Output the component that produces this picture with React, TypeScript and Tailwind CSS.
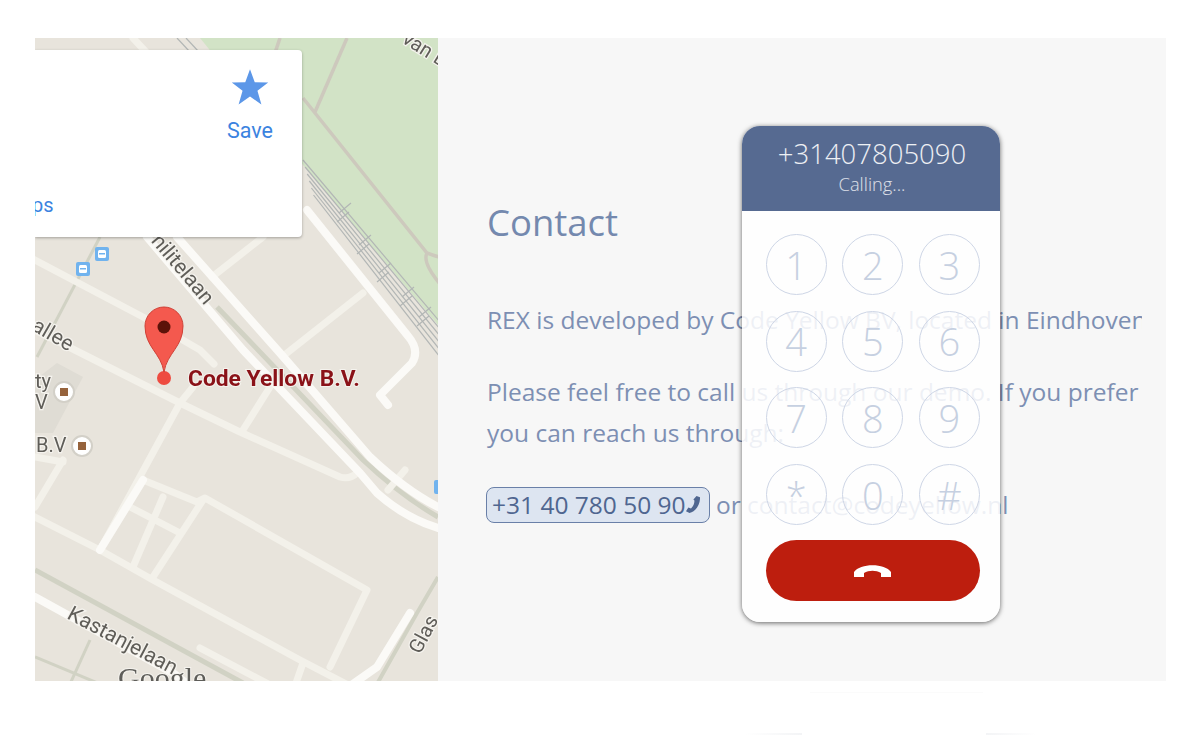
import React from "react";

const minorRoads = [
  "M35 330 L180 403 L240 432 L340 477 Q350 480 358 472",
  "M193 387 L180 403 L100 550",
  "M270 387 L243 430",
  "M35 517 L100 550 L153 580 L300 660 L350 686",
  "M143 480 L197 502 L205 498 L367 590 L330 667",
  "M130 507 L180 533",
  "M163 497 L133 567",
  "M203 500 L153 577",
  "M63 460 L35 507",
  "M35 457 L63 462",
  "M263 237 L212 277",
  "M363 293 L287 353",
  "M303 663 L295 686",
  "M200 648 L272 686",
  "M35 260 L143 317 L200 350 L214 364",
  "M405 470 L388 490",
  "M133 38 L146 52",
];

const majorRoads = [
  "M147 237 L243 350 L360 473 L377 493 Q405 518 438 528",
  "M177 237 L280 353 L370 457 Q405 490 438 507",
  "M307 210 L408 336 Q420 350 412 363 L380 395 L388 405",
  "M35 597 L173 673 L190 686",
  "M410 613 L377 667 L350 686",
  "M100 550 L143 480",
];

const railLines = [0, 7, 14, 21, 28, 35];
const railTies = [
  [345, 208],
  [365, 240],
  [385, 268],
  [408, 292],
  [425, 312],
];

const MapDrawing: React.FC = () => (
  <svg viewBox="35 38 403 643" className="absolute inset-0 h-full w-full blur-[0.6px]">
    <rect x="35" y="38" width="403" height="643" fill="#e8e4dc" />
    <polygon points="200,38 438,38 438,325 303,165" fill="#d2e3c6" />
    <polygon points="35,380 57,363 83,377 53,433 35,433" fill="#dfdcd4" />

    {/* green paths */}
    <g fill="none" stroke="#cdc9bd" strokeWidth="3.5">
      <path d="M347 38 L315 112" />
      <path d="M280 38 L274 56" />
      <path d="M303 98 L427 253 Q438 257 440 257" />
      <path d="M427 253 Q422 262 440 284" />
    </g>

    {/* railway */}
    <g fill="none" stroke="#b2b6b5" strokeWidth="1.2">
      <path d="M177 38 L190 52" />
      <path d="M186 38 L199 52" />
      {railLines.map((o) => (
        <path key={o} d={`M${303 + o * 0.3} ${160 + o} L${440} ${322 + o}`} />
      ))}
      {railTies.map(([x, y]) => (
        <path key={x} d={`M${x - 6} ${y + 5} L${x + 6} ${y - 5} M${x - 8} ${y + 14} L${x + 4} ${y + 4}`} />
      ))}
    </g>

    <g fill="none" stroke="#d1d2c4" strokeWidth="5">
      <path d="M35 570 L243 683" />
      <path d="M100 237 L37 357" strokeWidth="3" />
      <path d="M217 307 L363 460 Q400 495 438 517" />
      <path d="M438 577 L417 613 L377 684" strokeWidth="4" />
      <path d="M90 640 L70 684" strokeWidth="3" />
      <path d="M35 657 L100 684" strokeWidth="3" />
    </g>

    <g fill="none" stroke="#f3f1ea" strokeWidth="7" strokeLinecap="round" strokeLinejoin="round">
      {minorRoads.map((d) => (
        <path key={d} d={d} />
      ))}
    </g>
    <g fill="none" stroke="#fbfaf7" strokeWidth="8" strokeLinecap="round" strokeLinejoin="round">
      {majorRoads.map((d) => (
        <path key={d} d={d} />
      ))}
    </g>

    {/* bus stops */}
    <g>
      <rect x="95" y="247" width="14" height="14" rx="2" fill="#71b3ee" />
      <rect x="98" y="250" width="8" height="8" rx="1.5" fill="#fff" />
      <rect x="99" y="253" width="6" height="1.5" fill="#71b3ee" />
      <rect x="76" y="262" width="14" height="14" rx="2" fill="#71b3ee" />
      <rect x="79" y="265" width="8" height="8" rx="1.5" fill="#fff" />
      <rect x="80" y="268" width="6" height="1.5" fill="#71b3ee" />
      <rect x="434" y="480" width="10" height="14" rx="2" fill="#71b3ee" />
    </g>

    {/* places */}
    <g>
      <circle cx="64" cy="392" r="10" fill="#fff" stroke="#d3d0c8" strokeWidth="2" />
      <rect x="60" y="388" width="8" height="8" fill="#96633c" />
      <circle cx="82" cy="446" r="10" fill="#fff" stroke="#d3d0c8" strokeWidth="2" />
      <rect x="78" y="442" width="8" height="8" fill="#96633c" />
    </g>

    <g
      fill="#5f5d58"
      stroke="#f5f3ee"
      strokeWidth="2.5"
      className="[paint-order:stroke]"
      fontFamily="Roboto, sans-serif"
      fontSize="20"
    >
      <text x="30" y="332" transform="rotate(30 35 332)" fontSize="21">allee</text>
      <text x="35" y="388">ty</text>
      <text x="35" y="409">V</text>
      <text x="36" y="452">B.V</text>
      <text x="142" y="231" transform="rotate(50 142 231)" fontSize="21">Philitelaan</text>
      <text x="66" y="618" transform="rotate(28 66 618)" fontSize="21">Kastanjelaan</text>
      <text x="401" y="42" transform="rotate(32 401 42)">van L</text>
      <text x="420" y="655" transform="rotate(-62 420 655)">Glas</text>
    </g>

    <text
      x="118"
      y="688"
      fill="#5e5d59"
      stroke="#f5f3ee"
      strokeWidth="2"
      fontFamily="'Liberation Serif', serif"
      fontSize="30"
      className="[paint-order:stroke]"
    >
      Google
    </text>

    {/* pin */}
    <circle cx="164" cy="378" r="7" fill="#ee4b40" />
    <path
      d="M164 372 C161 353 145 347 145 326 A19 19 0 0 1 183 326 C183 347 167 353 164 372 Z"
      fill="#f4594e"
      stroke="#cf4137"
      strokeWidth="1"
    />
    <circle cx="164" cy="327" r="6.5" fill="#5c1209" />
    <text
      x="188"
      y="386"
      fill="#8a1218"
      stroke="#f5f3ee"
      strokeWidth="2"
      fontFamily="Roboto, sans-serif"
      fontWeight="700"
      fontSize="22.8"
      className="[paint-order:stroke]"
    >
      Code Yellow B.V.
    </text>
  </svg>
);

const PlaceCard: React.FC = () => (
  <div className="absolute left-0 top-[12px] flex h-[187px] w-[267px] flex-col justify-between overflow-hidden rounded-r bg-white pb-[20px] pt-[18px] font-['Roboto',sans-serif] text-[#3b83e0] shadow-[0_1px_3px_rgba(0,0,0,0.3)]">
    <div className="mr-[23px] flex w-[58px] flex-col items-center self-end">
      <svg viewBox="0 0 24 24" className="h-[38px] w-[38px]" fill="#5c97e8">
        <path d="M12 0.8 L15 9 L23.5 9.2 L16.7 14.4 L19.2 23 L12 18 L4.8 23 L7.3 14.4 L0.5 9.2 L9 9 Z" />
      </svg>
      <span className="mt-[12px] text-[21.5px] leading-[25px]">Save</span>
    </div>
    <span className="ml-[-3px] text-[20px] leading-[24px]">ps</span>
  </div>
);

const dialKeys = ["1", "2", "3", "4", "5", "6", "7", "8", "9", "*", "0", "#"];

const PhonePopup: React.FC = () => (
  <div className="absolute left-[742px] top-[126px] flex h-[496px] w-[258px] flex-col overflow-hidden rounded-[18px] bg-white/[0.87] font-['Open_Sans',sans-serif] font-light shadow-[0_1px_5px_rgba(0,0,0,0.6)]">
    <div className="flex h-[85px] flex-col items-center bg-[#566a91] pl-[2px] pt-[10px] text-white/90">
      <div className="text-[27.5px] leading-[36px]">+31407805090</div>
      <div className="text-[18.3px] leading-[24px] text-white/80">Calling...</div>
    </div>
    <div className="flex flex-1 flex-col pl-[23.7px] pt-[23.3px]">
      <div className="grid grid-cols-[61px_61px_61px] gap-[15.6px]">
        {dialKeys.map((key) => (
          <div
            key={key}
            className="flex h-[61px] w-[61px] items-center justify-center rounded-full border border-[#ced6e6] text-[38px] leading-none text-[#c6d0e1]"
          >
            {key}
          </div>
        ))}
      </div>
      <div className="mt-[15px] flex h-[61px] w-[214.3px] items-center justify-center rounded-full bg-[#bd1e0e]">
        <svg viewBox="0 0 37 12" className="h-[12px] w-[37px]" fill="#fff">
          <path d="M0 12 V7 C6 -2 31 -2 37 7 V12 H27 V8 C22 5 15 5 10 8 V12 Z" />
        </svg>
      </div>
    </div>
  </div>
);

const ContactPanel: React.FC = () => (
  <div className="flex-1 bg-[#f7f7f7] pl-[49px] pt-[161px] font-['Open_Sans',sans-serif] text-[24.5px] leading-[41px] text-[#7d8fb3]">
    <h2 className="text-[36.5px] leading-[46px] text-[#7489ae]">Contact</h2>
    <div className="mt-[54px] w-[655px] overflow-hidden whitespace-nowrap">
      REX is developed by Code Yellow BV, located in Eindhoven
    </div>
    <div className="mt-[31px] w-[655px] whitespace-nowrap">
      <p>Please feel free to call us through our demo. If you prefer</p>
      <p>you can reach us through:</p>
    </div>
    <div className="mt-[31px] flex items-center whitespace-nowrap">
      <span className="ml-[-1px] flex h-[36px] w-[224px] items-center rounded-[8px] border border-[#6a80a8] bg-[#dde5f1] pl-[5px] text-[#4f6690]">
        +31 40 780 50 90
        <svg viewBox="0 0 14 17" className="h-[17px] w-[14px]" fill="#4f6690">
          <path d="M10.5 0 L14 1.2 C14.4 8 10 15.5 3.5 17 L0 15.2 L2.4 11.4 L5 12.4 C7.4 10.4 8.6 7.4 8.4 4.4 L7.4 3.6 Z" />
        </svg>
      </span>
      <span className="ml-[6px]">or contact@codeyellow.nl</span>
    </div>
  </div>
);

export default function App() {
  return (
    <div className="relative h-[735px] w-[1200px] overflow-hidden bg-white pl-[35px] pt-[38px]">
      <div className="flex h-[643px] w-[1131px]">
        <div className="relative w-[403px] overflow-hidden">
          <MapDrawing />
          <PlaceCard />
        </div>
        <ContactPanel />
      </div>
      <PhonePopup />
      {/* faint marks along the bottom edge */}
      <div className="absolute left-[810px] top-[692px] h-px w-[173px] bg-[#fbfbfb]" />
      <div className="absolute bottom-0 left-[745px] h-[2px] w-[57px] bg-gradient-to-r from-white to-[#f3f4f6]" />
      <div className="absolute bottom-0 left-[986px] h-[2px] w-[50px] bg-gradient-to-l from-white to-[#f3f4f6]" />
    </div>
  );
}
